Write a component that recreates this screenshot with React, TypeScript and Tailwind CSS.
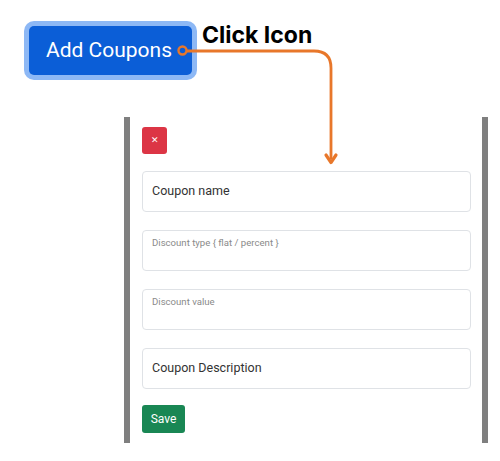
import React from "react";

export default function App() {
  const field =
    "w-full h-[41px] border border-[#dfe2e6] rounded-[4px] bg-white px-[9px] text-left";
  return (
    <div
      className="relative w-[500px] h-[461px] bg-white overflow-hidden"
      style={{ fontFamily: "Roboto, 'Liberation Sans', sans-serif" }}
    >
      <div className="pt-[26px] pl-[29px]">
        <button className="w-[163px] h-[49px] rounded-[5px] bg-[#0b5ed7] ring-[5px] ring-[#8db8f5] text-white text-[21px] leading-none pl-[17px] flex items-center justify-start">
          Add Coupons
        </button>
      </div>

      <div
        className="absolute left-[202px] top-[20px] text-[23px] font-bold text-black leading-[30px]"
        style={{ fontFamily: "Inter, 'Noto Sans', sans-serif" }}
      >
        Click Icon
      </div>

      <div className="ml-[124px] mt-[42px] w-[364px] h-[326px] border-l-[6px] border-r-[6px] border-[#7f7f7f] pl-[12px] pr-[11px] pt-[10px] flex flex-col">
        <button className="w-[25px] h-[27px] rounded-[3px] bg-[#dc3545] text-white text-[9px] leading-none flex items-center justify-center">
          ✕
        </button>
        <div className="mt-[17px] flex flex-col gap-[18px]">
          <div className={field + " flex items-center text-[12.5px] text-[#333]"}>
            Coupon name
          </div>
          <div className={field + " pt-[5px] text-[9.6px] text-[#8a8a8a]"}>
            Discount type {"{"} flat / percent {"}"}
          </div>
          <div className={field + " pt-[5px] text-[9.6px] text-[#8a8a8a]"}>
            Discount value
          </div>
          <div className={field + " flex items-center text-[12.5px] text-[#333]"}>
            Coupon Description
          </div>
        </div>
        <button className="mt-[16px] w-[43px] h-[28px] rounded-[3px] bg-[#198754] text-white text-[12px] leading-none flex items-center justify-center">
          Save
        </button>
      </div>

      <svg
        className="absolute left-0 top-0 pointer-events-none"
        width="500"
        height="461"
        viewBox="0 0 500 461"
      >
        <circle cx="182.5" cy="50.5" r="4" fill="none" stroke="#e8772a" strokeWidth="2.4" />
        <path
          d="M186.5 51 H314 Q331 51 331 68 V159"
          fill="none"
          stroke="#e8772a"
          strokeWidth="2.8"
        />
        <path
          d="M326 155 L331 162.5 L336 155"
          fill="none"
          stroke="#e8772a"
          strokeWidth="3.2"
          strokeLinecap="round"
          strokeLinejoin="round"
        />
      </svg>
    </div>
  );
}
